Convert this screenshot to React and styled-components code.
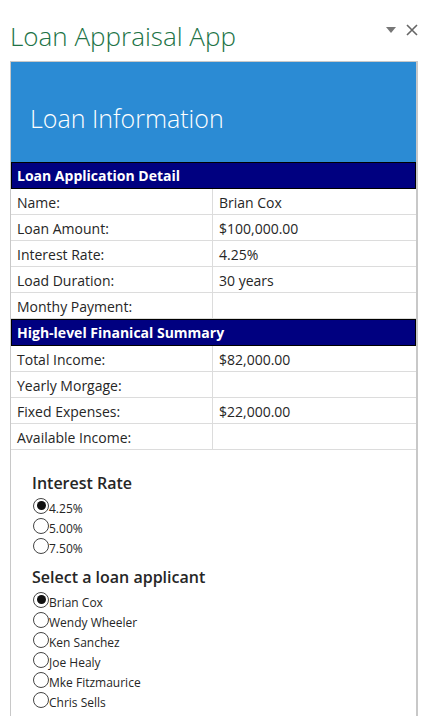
import React, { useState } from "react";
import styled, { createGlobalStyle } from "styled-components";

const GlobalStyle = createGlobalStyle`
  body {
    margin: 0;
    background: #fff;
    font-family: "Open Sans", "Noto Sans", sans-serif;
    color: #262626;
  }
`;

const Page = styled.div`
  width: 428px;
  height: 716px;
  overflow: hidden;
`;

const TitleBar = styled.div`
  height: 61px;
  display: flex;
  align-items: flex-start;
  justify-content: space-between;
  padding: 0 10px;
`;

const Title = styled.h1`
  margin: 18px 0 0;
  font-size: 26px;
  font-weight: 300;
  color: #217346;
`;

const PaneButtons = styled.div`
  display: flex;
  align-items: center;
  gap: 10px;
  margin-top: 24px;
`;

const Panel = styled.div`
  margin: 0 10px;
  width: 405px;
  border: 1px solid #c8c8c8;
  border-right-width: 2px;
  border-bottom: none;
  height: 660px;
`;

const Banner = styled.div`
  height: 100px;
  background: #2b8bd4;
  display: flex;
  align-items: center;
  padding-left: 19px;
`;

const BannerText = styled.h2`
  margin: 12px 0 0;
  font-size: 25px;
  font-weight: 300;
  color: #fff;
`;

const Table = styled.div`
  display: grid;
  grid-template-columns: 202px 1fr;
`;

const SectionHead = styled.div`
  grid-column: 1 / 3;
  height: 25px;
  background: #000080;
  border: 1px solid #000;
  color: #fff;
  font-weight: 700;
  font-size: 14px;
  display: flex;
  align-items: center;
  padding-left: 5px;
`;

const Cell = styled.div`
  height: 25px;
  border-bottom: 1px solid #dcdcdc;
  border-right: ${(p) => (p.$left ? "1px solid #dcdcdc" : "none")};
  font-size: 14px;
  display: flex;
  align-items: center;
  padding: 1px 0 0 6px;
  box-sizing: border-box;
  height: 26px;
`;

const Options = styled.div`
  padding: 22px 0 0 21px;
`;

const GroupTitle = styled.div`
  font-size: 16px;
  font-weight: 600;
  color: #262626;
  margin-bottom: 4px;
`;

const Group = styled.div`
  margin-bottom: 8px;
`;

const OptionRow = styled.label`
  display: flex;
  align-items: center;
  height: 20px;
  font-size: 12px;
  color: #262626;
  cursor: pointer;
`;

const Dot = styled.span`
  width: 16px;
  height: 16px;
  border: 1px solid #444;
  border-radius: 50%;
  box-sizing: border-box;
  display: flex;
  align-items: center;
  justify-content: center;
  margin: -5px 0 0 1px;
  &::after {
    content: "";
    width: 9px;
    height: 9px;
    border-radius: 50%;
    background: ${(p) => (p.$on ? "#111" : "transparent")};
  }
`;

const loanRows = [
  ["Name:", "Brian Cox"],
  ["Loan Amount:", "$100,000.00"],
  ["Interest Rate:", "4.25%"],
  ["Load Duration:", "30 years"],
  ["Monthy Payment:", ""],
];

const summaryRows = [
  ["Total Income:", "$82,000.00"],
  ["Yearly Morgage:", ""],
  ["Fixed Expenses:", "$22,000.00"],
  ["Available Income:", ""],
];

const rates = ["4.25%", "5.00%", "7.50%"];
const people = [
  "Brian Cox",
  "Wendy Wheeler",
  "Ken Sanchez",
  "Joe Healy",
  "Mke Fitzmaurice",
  "Chris Sells",
];

const Rows = ({ rows }) =>
  rows.map(([k, v]) => (
    <React.Fragment key={k}>
      <Cell $left>{k}</Cell>
      <Cell>{v}</Cell>
    </React.Fragment>
  ));

const RadioGroup = ({ title, items, value, onChange }) => (
  <Group>
    <GroupTitle>{title}</GroupTitle>
    {items.map((it) => (
      <OptionRow key={it} onClick={() => onChange(it)}>
        <Dot $on={value === it} />
        {it}
      </OptionRow>
    ))}
  </Group>
);

export default function App() {
  const [rate, setRate] = useState("4.25%");
  const [person, setPerson] = useState("Brian Cox");

  return (
    <Page>
      <GlobalStyle />
      <TitleBar>
        <Title>Loan Appraisal App</Title>
        <PaneButtons>
          <svg width="10" height="6" viewBox="0 0 10 6">
            <path d="M0 0h10L5 6z" fill="#777" />
          </svg>
          <svg width="12" height="12" viewBox="0 0 12 12">
            <path d="M1 1l10 10M11 1L1 11" stroke="#666" strokeWidth="1.6" />
          </svg>
        </PaneButtons>
      </TitleBar>
      <Panel>
        <Banner>
          <BannerText>Loan Information</BannerText>
        </Banner>
        <Table>
          <SectionHead>Loan Application Detail</SectionHead>
          <Rows rows={loanRows} />
          <SectionHead>High-level Finanical Summary</SectionHead>
          <Rows rows={summaryRows} />
        </Table>
        <Options>
          <RadioGroup title="Interest Rate" items={rates} value={rate} onChange={setRate} />
          <RadioGroup title="Select a loan applicant" items={people} value={person} onChange={setPerson} />
        </Options>
      </Panel>
    </Page>
  );
}
